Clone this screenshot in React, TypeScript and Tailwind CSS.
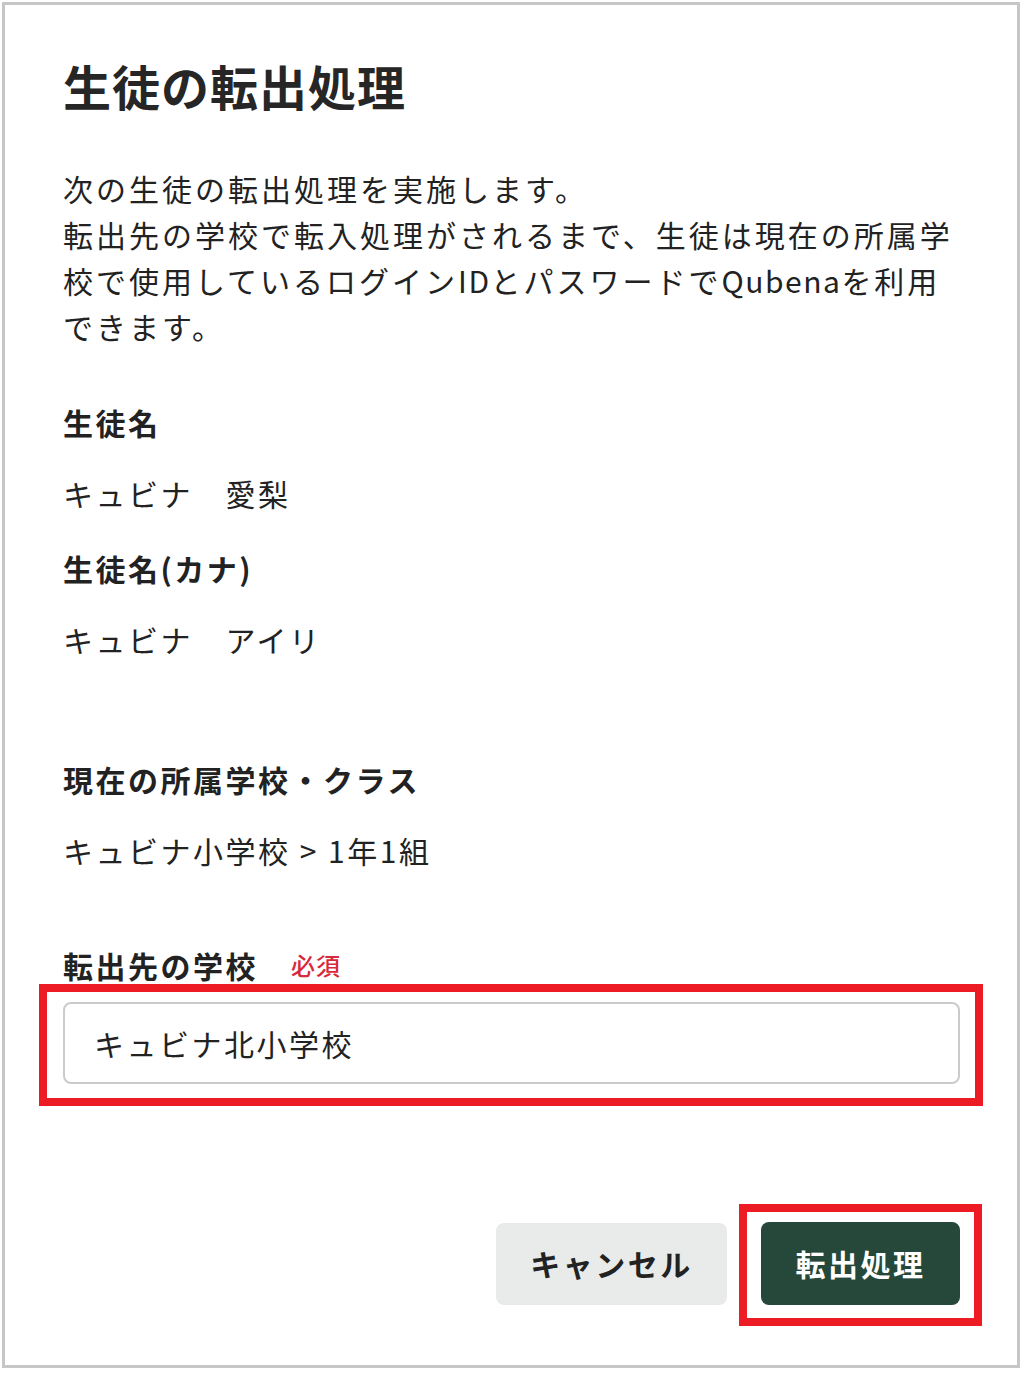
import React from 'react';

const font = { fontFamily: '"Noto Sans CJK JP", "Noto Sans", sans-serif' };

function Field({ label, value }: { label: string; value: string }) {
  return (
    <div>
      <div className="text-[30px] font-bold leading-[46px] tracking-[2.5px] text-[#222]">{label}</div>
      <div className="mt-[25px] text-[30px] leading-[46px] tracking-[2.5px] text-[#222]">{value}</div>
    </div>
  );
}

export default function App() {
  return (
    <div className="min-h-[1373px] bg-white pt-[2px]" style={font}>
      <div className="ml-[2px] h-[1366px] w-[1018px] border-[3px] border-[#c6c6c6] bg-white pl-[58px] pr-[57px] pt-[44px]">
        {/* Title */}
        <h1 className="text-[48px] font-bold leading-[72px] tracking-[1px] text-[#262626]">生徒の転出処理</h1>

        {/* Description */}
        <p className="mt-[44px] text-[30px] leading-[46px] tracking-[3px] text-[#222]">
          <span className="block whitespace-nowrap">次の生徒の転出処理を実施します。</span>
          <span className="block whitespace-nowrap">転出先の学校で転入処理がされるまで、生徒は現在の所属学</span>
          <span className="block whitespace-nowrap">
            校で使用しているログイン<span className="tracking-[1.5px]">ID</span>とパスワードで
            <span className="tracking-[1.5px]">Qubena</span>を利用
          </span>
          <span className="block whitespace-nowrap">できます。</span>
        </p>

        {/* Student info */}
        <div className="mt-[50px]">
          <Field label="生徒名" value="キュビナ　愛梨" />
        </div>
        <div className="mt-[29px]">
          <Field label="生徒名(カナ)" value="キュビナ　アイリ" />
        </div>
        <div className="mt-[94px]">
          <Field label="現在の所属学校・クラス" value="キュビナ小学校 > 1年1組" />
        </div>

        {/* Destination school */}
        <div className="mt-[69px] flex items-center">
          <span className="text-[30px] font-bold leading-[46px] tracking-[2.5px] text-[#222]">転出先の学校</span>
          <span className="ml-[33px] text-[24px] font-medium leading-[46px] tracking-[1px] text-[#d8283c]">必須</span>
        </div>
        <div className="relative mt-[14px]">
          <div className="flex h-[82px] items-center rounded-[8px] border-2 border-[#cbcbcb] bg-white pl-[29px] text-[30px] tracking-[2.5px] text-[#222]">
            キュビナ北小学校
          </div>
          <div className="pointer-events-none absolute -bottom-[22px] -left-[24px] -right-[23px] -top-[18px] border-[8px] border-[#ed1c24]" />
        </div>

        {/* Actions */}
        <div className="mt-[138px] flex items-center justify-end gap-[34px]">
          <button className="flex h-[82px] w-[231px] items-center justify-center rounded-[8px] bg-[#e9eaea] text-[30px] font-bold tracking-[2.5px] text-[#222]">
            キャンセル
          </button>
          <div className="relative">
            <button className="flex h-[83px] w-[199px] items-center justify-center rounded-[8px] bg-[#25483b] text-[30px] font-bold tracking-[2.5px] text-white">
              転出処理
            </button>
            <div className="pointer-events-none absolute -bottom-[21px] -left-[22px] -right-[22px] -top-[18px] border-[8px] border-[#ed1c24]" />
          </div>
        </div>
      </div>
    </div>
  );
}
